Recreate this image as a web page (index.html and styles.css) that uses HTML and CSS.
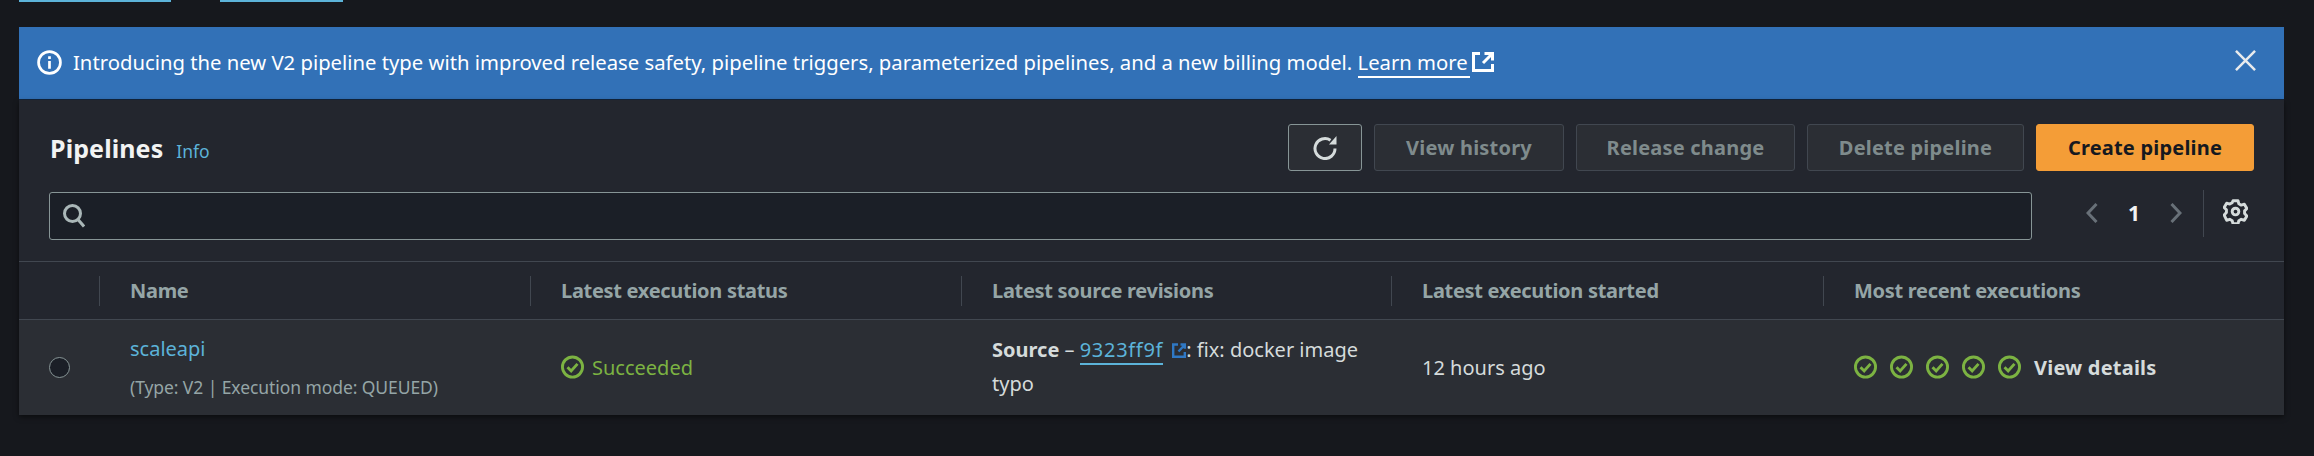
FILE: index.html
```html
<!DOCTYPE html>
<html lang="en">
<head>
<meta charset="utf-8">
<title>Pipelines</title>
<link rel="stylesheet" href="styles.css">
</head>
<body>
<nav class="crumbs"><span class="crumb crumb-a"></span><span class="crumb crumb-b"></span></nav>
<main class="content">
  <div class="banner">
    <svg class="banner-icon" viewBox="0 0 24 24" fill="none" stroke="#fff" stroke-width="2.6"><circle cx="12" cy="12" r="10.5"/><path d="M12 10.5V18M12 6v2.6"/></svg>
    <p class="banner-text">Introducing the new V2 pipeline type with improved release safety, pipeline triggers, parameterized pipelines, and a new billing model. <a class="banner-link">Learn more</a></p>
    <svg class="banner-ext" viewBox="0 0 22 20" fill="none" stroke="#fff" stroke-width="3"><path d="M8 1.5H1.5v17h19V12M12.5 1.5h8v7M20 2l-9 9"/></svg>
    <svg class="banner-close" viewBox="0 0 22 22" fill="none" stroke="#e9ebed" stroke-width="2.6"><path d="M1 1l20 20M21 1L1 21"/></svg>
  </div>
  <section class="panel">
    <header class="panel-head">
      <div class="title-row">
        <h1 class="title">Pipelines</h1>
        <a class="info">Info</a>
      </div>
      <div class="actions">
        <button class="btn btn-icon"><svg viewBox="0 0 24 24" fill="none" stroke="#d5dbdb" stroke-width="3"><path d="M17.5 4.2A10 10 0 1 0 22 12.5"/><path d="M16 8.5h7.5V0z" fill="#d5dbdb" stroke="none"/></svg></button>
        <button class="btn btn-off btn-history">View history</button>
        <button class="btn btn-off btn-release">Release change</button>
        <button class="btn btn-off btn-delete">Delete pipeline</button>
        <button class="btn btn-primary">Create pipeline</button>
      </div>
    </header>
    <div class="tools">
      <div class="search">
        <svg class="search-icon" viewBox="0 0 22 24" fill="none" stroke="#aab7b8" stroke-width="3"><circle cx="9.5" cy="9.5" r="8"/><path d="M15 15.5l6 7"/></svg>
      </div>
      <div class="pager">
        <svg class="chev" viewBox="0 0 12 20" fill="none" stroke="#687078" stroke-width="3"><path d="M10.5 1L2 10l8.500 9"/></svg>
        <span class="page">1</span>
        <svg class="chev" viewBox="0 0 12 20" fill="none" stroke="#687078" stroke-width="3"><path d="M1.500 1L10 10l-8.500 9"/></svg>
      </div>
      <div class="prefs">
        <svg class="gear" viewBox="0 0 24 24" fill="none" stroke="#d5dbdb" stroke-width="2.8" stroke-linejoin="round"><path d="M9.6 1.600h4.800l.8 3 2.300 1.300 3-.9 2.400 4.100-2.200 2.300v2.600l2.200 2.300-2.400 4.100-3-.9-2.300 1.300-.8 3H9.600l-.8-3-2.300-1.300-3 .9L1.100 15.300l2.200-2.300v-2.600L1.100 8.100l2.400-4.100 3 .9 2.300-1.300z"/><circle cx="12" cy="12" r="3.200"/></svg>
      </div>
    </div>
    <table class="grid">
      <thead>
        <tr>
          <th class="col-radio"></th>
          <th class="col-name"><span class="th">Name</span></th>
          <th class="col-status"><span class="th">Latest execution status</span></th>
          <th class="col-source"><span class="th">Latest source revisions</span></th>
          <th class="col-started"><span class="th">Latest execution started</span></th>
          <th class="col-recent"><span class="th">Most recent executions</span></th>
        </tr>
      </thead>
      <tbody>
        <tr>
          <td class="radio-cell"><span class="radio"></span></td>
          <td class="name-cell"><a class="name-link">scaleapi</a><div class="name-sub">(Type: V2 | Execution mode: QUEUED)</div></td>
          <td><span class="status"><svg class="check" viewBox="0 0 24 24" fill="none" stroke="#7cb342" stroke-width="3"><circle cx="12" cy="12" r="10.500"/><path d="M6.800 12.300l3.800 3.800L17.200 8.700"/></svg>Succeeded</span></td>
          <td class="source-cell"><div><b>Source</b> – <a class="commit">9323ff9f</a><svg class="commit-ext" viewBox="0 0 14 15" fill="none" stroke="#2f78c4" stroke-width="2.4"><path d="M6 1.500H1.200v12.300h11.600V9M8.500 1.500h4.300v4.300M12.500 2L6.500 8.500"/></svg>: fix: docker image</div><div>typo</div></td>
          <td class="started-cell">12 hours ago</td>
          <td>
            <div class="recent">
              <svg class="check" viewBox="0 0 24 24" fill="none" stroke="#7cb342" stroke-width="3"><circle cx="12" cy="12" r="10.500"/><path d="M6.800 12.300l3.800 3.800L17.200 8.700"/></svg>
              <svg class="check" viewBox="0 0 24 24" fill="none" stroke="#7cb342" stroke-width="3"><circle cx="12" cy="12" r="10.500"/><path d="M6.800 12.300l3.800 3.800L17.200 8.700"/></svg>
              <svg class="check" viewBox="0 0 24 24" fill="none" stroke="#7cb342" stroke-width="3"><circle cx="12" cy="12" r="10.500"/><path d="M6.800 12.300l3.800 3.800L17.200 8.700"/></svg>
              <svg class="check" viewBox="0 0 24 24" fill="none" stroke="#7cb342" stroke-width="3"><circle cx="12" cy="12" r="10.500"/><path d="M6.800 12.300l3.800 3.800L17.200 8.700"/></svg>
              <svg class="check" viewBox="0 0 24 24" fill="none" stroke="#7cb342" stroke-width="3"><circle cx="12" cy="12" r="10.500"/><path d="M6.800 12.300l3.800 3.800L17.200 8.700"/></svg>
              <a class="details">View details</a>
            </div>
          </td>
        </tr>
      </tbody>
    </table>
  </section>
</main>
</body>
</html>
```

FILE: styles.css
```css
* { box-sizing: border-box; }
html, body { margin: 0; height: 100%; }
body {
  background: #16181d;
  font-family: "Noto Sans", "Lato", sans-serif;
  font-size: 20px;
  color: #d5dbdb;
  overflow: hidden;
}
.crumbs { display: flex; height: 27px; padding-left: 19px; align-items: flex-start; }
.crumb { display: block; height: 2px; background: #5cb3d9; }
.crumb-a { width: 152px; }
.crumb-b { width: 123px; margin-left: 49px; }
.content { width: 2265px; margin-left: 19px; }
.banner {
  display: flex; align-items: center; height: 73px;
  padding: 0 16px 2px 18px;
  background: #3271b7; border-bottom: 1px solid #12263f; color: #fff;
}
.banner-icon { width: 25px; height: 25px; flex: none; }
.banner-text { margin: 0 0 0 11px; font-size: 20.280px; }
.banner-link { border-bottom: 2px solid #fff; padding-right: 2px; }
.banner-ext { width: 22px; height: 20px; margin-left: 2px; flex: none; }
.banner-close { width: 21px; height: 21px; margin-left: auto; flex: none; margin-right: 12px; margin-bottom: 4px; }
.panel { background: #23262e; height: 315px; box-shadow: 0 2px 5px rgba(0,0,0,.5); }
.panel-head { display: flex; justify-content: space-between; align-items: center; padding: 24px 30px 0 31px; height: 71px; }
.title-row { display: flex; align-items: baseline; gap: 13px; }
.title { margin: 0; font-size: 25px; font-weight: 700; color: #f2f3f3; letter-spacing: 0.1px; }
.info { font-size: 17.500px; color: #5cb3d9; }
.actions { display: flex; gap: 12px; }
.btn { height: 47px; border-radius: 3px; font: 700 20px "Noto Sans", "Lato", sans-serif; letter-spacing: 0.2px; padding: 0; }
.btn-icon { width: 74px; background: #2b2e34; border: 1px solid #879596; display: flex; align-items: center; justify-content: center; }
.btn-icon svg { width: 24px; height: 24px; }
.btn-off { background: #2b2e34; border: 1px solid #414750; color: #7f8b8c; }
.btn-history { width: 190px; }
.btn-release { width: 219px; }
.btn-delete { width: 217px; }
.btn-primary { width: 218px; background: #f49d37; border: 1px solid #f49d37; color: #16191f; }
.tools { display: flex; align-items: flex-start; height: 48px; margin-top: 21px; padding-left: 30px; }
.search { width: 1983px; height: 48px; background: #1b1f27; border: 1px solid #879596; border-radius: 3px; display: flex; align-items: center; padding-left: 13px; }
.search-icon { width: 22px; height: 24px; }
.pager { display: flex; align-items: center; height: 42px; width: 171px; padding-left: 54px; }
.chev { width: 12px; height: 20px; flex: none; }
.page { width: 72px; text-align: center; font-weight: 700; font-size: 21px; color: #f2f3f3; }
.prefs { flex: none; height: 47px; margin-top: -2px; border-left: 1px solid #414750; padding: 0 0 4px 19px; display: flex; align-items: center; }
.gear { width: 25px; height: 25px; }
.grid { border-collapse: collapse; table-layout: fixed; width: 2265px; margin-top: 21px; border-top: 1px solid #414750; }
.grid th { height: 58px; padding: 0; text-align: left; vertical-align: middle; font-weight: 700; font-size: 20px; letter-spacing: -0.3px; color: #95a5a6; border-bottom: 1px solid #414750; }
.th { display: flex; align-items: center; height: 30px; padding-left: 30px; border-left: 1px solid #414750; white-space: nowrap; }
.col-radio { width: 80px; }
.col-name { width: 431px; }
.col-status { width: 431px; }
.col-source { width: 430px; }
.col-started { width: 432px; }
.col-recent { width: 461px; }
.grid td { height: 95px; background: #2b2e34; padding: 0 0 0 31px; vertical-align: middle; font-size: 20px; }
.grid td.radio-cell { padding-left: 30px; }
.radio { display: block; width: 21px; height: 21px; border-radius: 50%; background: #1b1f27; border: 1px solid #879596; }
.name-link { display: block; color: #5cb3d9; font-size: 20px; line-height: 27px; }
.name-sub { margin-top: 13px; font-size: 17.500px; line-height: 24px; color: #95a5a6; letter-spacing: -0.08px; }
.status { display: flex; align-items: center; gap: 8px; color: #7cb342; }
.check { width: 23px; height: 24px; flex: none; }
.source-cell { line-height: 34px; }
.commit { color: #5cb3d9; border-bottom: 2px solid #5cb3d9; letter-spacing: 0.7px; }
.commit-ext { width: 14px; height: 15px; margin-left: 9px; vertical-align: -1px; }
.recent { display: flex; align-items: center; gap: 13px; }
.details { font-weight: 700; letter-spacing: 0.2px; color: #d5dbdb; }
```
